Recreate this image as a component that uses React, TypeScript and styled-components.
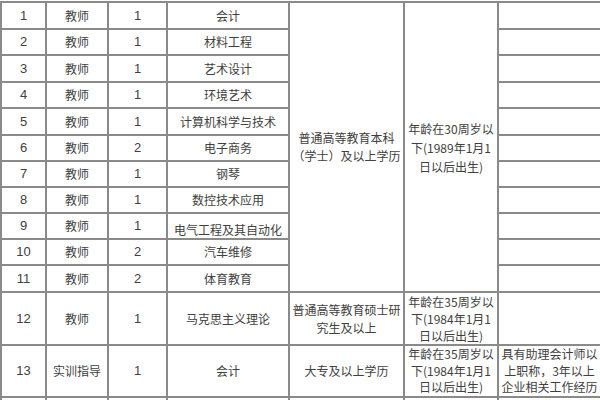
import React from "react";
import styled, { createGlobalStyle } from "styled-components";

const Global = createGlobalStyle`
  html, body { margin: 0; padding: 0; background: #fff; }
  body { width: 600px; height: 400px; overflow: hidden; }
`;

const Table = styled.table`
  margin-top: 1px;
  border-collapse: collapse;
  table-layout: fixed;
  width: 600px;
  font-family: "Noto Sans CJK SC", "Liberation Sans", sans-serif;
  font-size: 12px;
  color: #404040;
`;

const Row = styled.tr<{ $h: number }>`
  height: ${(p) => p.$h}px;
`;

const Cell = styled.td<{ $lh?: number; $shift?: number; $num?: boolean }>`
  border: 2px solid #8a8a8a;
  padding: ${(p) => (p.$shift ? `${p.$shift}px 0 0 0` : "0")};
  text-align: center;
  vertical-align: middle;
  white-space: nowrap;
  overflow: visible;
  line-height: ${(p) => (p.$lh ? `${p.$lh}px` : "14px")};
  font-size: ${(p) => (p.$num ? "13px" : "12px")};
  font-family: ${(p) =>
    p.$num
      ? `"Liberation Sans", "Noto Sans CJK SC", sans-serif`
      : `"Noto Sans CJK SC", "Liberation Sans", sans-serif`};
`;

const Lines = ({ lines }: { lines: string[] }) => (
  <>
    {lines.map((l, i) => (
      <React.Fragment key={i}>
        {l}
        {i < lines.length - 1 && <br />}
      </React.Fragment>
    ))}
  </>
);

const rows = [
  { n: "1", job: "教师", c: "1", major: "会计", h: 27 },
  { n: "2", job: "教师", c: "1", major: "材料工程", h: 26 },
  { n: "3", job: "教师", c: "1", major: "艺术设计", h: 27 },
  { n: "4", job: "教师", c: "1", major: "环境艺术", h: 26 },
  { n: "5", job: "教师", c: "1", major: "计算机科学与技术", h: 27 },
  { n: "6", job: "教师", c: "2", major: "电子商务", h: 26 },
  { n: "7", job: "教师", c: "1", major: "钢琴", h: 26 },
  { n: "8", job: "教师", c: "1", major: "数控技术应用", h: 26 },
  { n: "9", job: "教师", c: "1", major: "电气工程及其自动化", h: 26, shift: 8 },
  { n: "10", job: "教师", c: "2", major: "汽车维修", h: 26 },
  { n: "11", job: "教师", c: "2", major: "体育教育", h: 27 },
];

export default function App() {
  return (
    <>
      <Global />
      <Table>
        <colgroup>
          <col style={{ width: 45 }} />
          <col style={{ width: 62 }} />
          <col style={{ width: 59 }} />
          <col style={{ width: 122 }} />
          <col style={{ width: 115 }} />
          <col style={{ width: 94 }} />
          <col style={{ width: 103 }} />
        </colgroup>
        <tbody>
          {rows.map((r, i) => (
            <Row key={r.n} $h={r.h}>
              <Cell $num>{r.n}</Cell>
              <Cell>{r.job}</Cell>
              <Cell $num>{r.c}</Cell>
              <Cell $shift={r.shift}>{r.major}</Cell>
              {i === 0 && (
                <>
                  <Cell rowSpan={11} $lh={18}>
                    <Lines lines={["普通高等教育本科", "（学士）及以上学历"]} />
                  </Cell>
                  <Cell rowSpan={11} $lh={19}>
                    <Lines lines={["年龄在30周岁以", "下(1989年1月1", "日以后出生)"]} />
                  </Cell>
                </>
              )}
              <Cell />
            </Row>
          ))}
          <Row $h={53}>
            <Cell $num>12</Cell>
            <Cell>教师</Cell>
            <Cell $num>1</Cell>
            <Cell>马克思主义理论</Cell>
            <Cell $lh={17.5}>
              <Lines lines={["普通高等教育硕士研", "究生及以上"]} />
            </Cell>
            <Cell $lh={17}>
              <Lines lines={["年龄在35周岁以", "下(1984年1月1", "日以后出生)"]} />
            </Cell>
            <Cell />
          </Row>
          <Row $h={51}>
            <Cell $num>13</Cell>
            <Cell>实训指导</Cell>
            <Cell $num>1</Cell>
            <Cell>会计</Cell>
            <Cell>大专及以上学历</Cell>
            <Cell $lh={16.5}>
              <Lines lines={["年龄在35周岁以", "下(1984年1月1", "日以后出生)"]} />
            </Cell>
            <Cell $lh={16.5}>
              <Lines lines={["具有助理会计师以", "上职称，3年以上", "企业相关工作经历"]} />
            </Cell>
          </Row>
          <Row $h={40}>
            <Cell />
            <Cell />
            <Cell />
            <Cell />
            <Cell />
            <Cell />
            <Cell />
          </Row>
        </tbody>
      </Table>
    </>
  );
}
